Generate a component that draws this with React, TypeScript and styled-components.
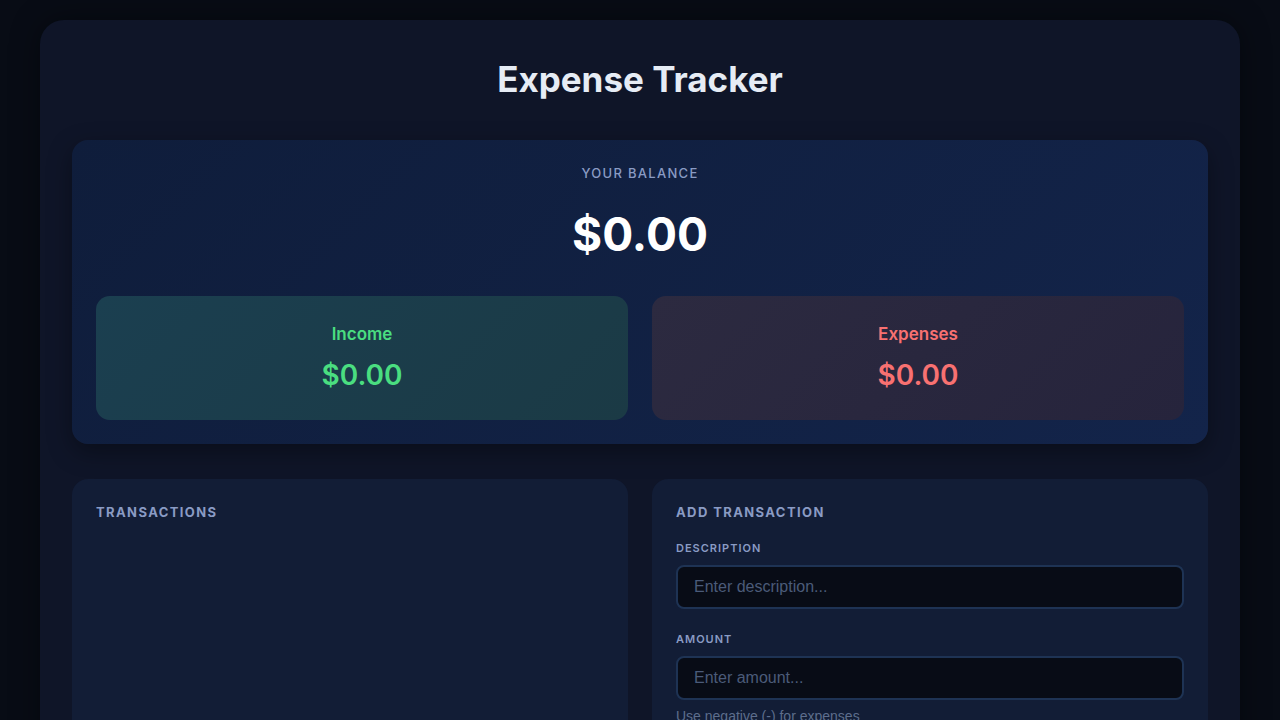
import styled, { createGlobalStyle } from "styled-components";

const GlobalStyle = createGlobalStyle`
  * {
    box-sizing: border-box;
  }

  body {
    margin: 0;
    background: #080c15;
    font-family: "Inter", "Noto Sans", sans-serif;
    color: #e2e8f0;
  }
`;

const Page = styled.div`
  padding: 20px 40px;
  min-height: 100vh;
`;

const Container = styled.div`
  background: #0f1528;
  border-radius: 24px;
  padding: 32px 32px 40px;
  box-shadow: 0 0 30px rgba(0, 0, 0, 0.4);
`;

const Title = styled.h1`
  margin: 8px 0 41px;
  text-align: center;
  font-size: 35px;
  font-weight: 700;
  line-height: 1.1;
  color: #e6ecf5;
`;

const BalanceCard = styled.section`
  background: linear-gradient(135deg, #0f1d3b 0%, #13244a 100%);
  border-radius: 16px;
  padding: 24px;
  box-shadow: 0 8px 24px rgba(0, 0, 0, 0.35);
`;

const BalanceLabel = styled.div`
  text-align: center;
  font-size: 13px;
  font-weight: 500;
  letter-spacing: 1.3px;
  color: #8a9bc4;
  margin-top: 1px;
`;

const BalanceValue = styled.div`
  text-align: center;
  font-size: 46px;
  font-weight: 700;
  color: #ffffff;
  margin: 26px 0 34px;
  line-height: 1.2;
`;

const Summary = styled.div`
  display: grid;
  grid-template-columns: 1fr 1fr;
  gap: 24px;
`;

const SummaryBox = styled.div<{ $tone: "income" | "expense" }>`
  height: 124px;
  border-radius: 14px;
  display: flex;
  flex-direction: column;
  align-items: center;
  justify-content: center;
  gap: 15px;
  background: ${({ $tone }) =>
    $tone === "income"
      ? "linear-gradient(135deg, #1b3f50 0%, #1b3a45 100%)"
      : "linear-gradient(135deg, #2c2a40 0%, #26243c 100%)"};
  color: ${({ $tone }) => ($tone === "income" ? "#4ade80" : "#f87171")};
`;

const SummaryLabel = styled.div`
  font-size: 17px;
  font-weight: 600;
  line-height: 20px;
`;

const SummaryValue = styled.div`
  font-size: 28px;
  font-weight: 600;
  line-height: 32px;
`;

const Columns = styled.div`
  display: grid;
  grid-template-columns: 1fr 1fr;
  gap: 24px;
  margin-top: 35px;
`;

const Panel = styled.section`
  background: #121d36;
  border-radius: 16px;
  padding: 24px;
  min-height: 400px;
`;

const PanelTitle = styled.h2`
  margin: 0 0 20px;
  font-size: 13px;
  font-weight: 700;
  letter-spacing: 1.4px;
  color: #8a9bc4;
  line-height: 18px;
`;

const Field = styled.div`
  display: flex;
  flex-direction: column;
  margin-bottom: 23px;
`;

const FieldLabel = styled.label`
  font-size: 11px;
  font-weight: 600;
  letter-spacing: 1px;
  color: #8a9bc4;
  margin-bottom: 10px;
`;

const Input = styled.input`
  height: 44px;
  padding: 0 16px;
  background: #080c16;
  border: 2px solid #1e3354;
  border-radius: 8px;
  color: #e2e8f0;
  font-family: "Liberation Sans", Arial, sans-serif;
  font-size: 16px;
  outline: none;

  &::placeholder {
    color: #4b5b79;
  }
`;

const Hint = styled.div`
  margin-top: 8px;
  font-family: "Liberation Sans", Arial, sans-serif;
  font-size: 14px;
  color: #5d6d8c;
`;

export default function App() {
  return (
    <>
      <GlobalStyle />
      <Page>
        <Container>
          <Title>Expense Tracker</Title>

          <BalanceCard>
            <BalanceLabel>YOUR BALANCE</BalanceLabel>
            <BalanceValue>$0.00</BalanceValue>
            <Summary>
              <SummaryBox $tone="income">
                <SummaryLabel>Income</SummaryLabel>
                <SummaryValue>$0.00</SummaryValue>
              </SummaryBox>
              <SummaryBox $tone="expense">
                <SummaryLabel>Expenses</SummaryLabel>
                <SummaryValue>$0.00</SummaryValue>
              </SummaryBox>
            </Summary>
          </BalanceCard>

          <Columns>
            <Panel>
              <PanelTitle>TRANSACTIONS</PanelTitle>
            </Panel>
            <Panel>
              <PanelTitle>ADD TRANSACTION</PanelTitle>
              <Field>
                <FieldLabel>DESCRIPTION</FieldLabel>
                <Input placeholder="Enter description..." />
              </Field>
              <Field>
                <FieldLabel>AMOUNT</FieldLabel>
                <Input placeholder="Enter amount..." />
                <Hint>Use negative (-) for expenses</Hint>
              </Field>
            </Panel>
          </Columns>
        </Container>
      </Page>
    </>
  );
}
